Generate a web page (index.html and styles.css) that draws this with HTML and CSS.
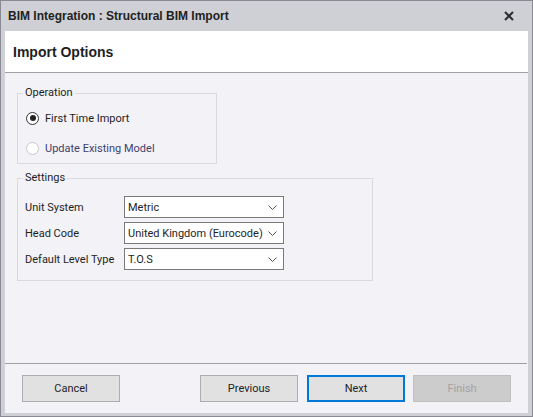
FILE: index.html
```html
<!DOCTYPE html>
<html>
<head>
<meta charset="utf-8">
<link rel="stylesheet" href="styles.css">
</head>
<body>
<div class="window">
  <div class="titlebar">
    <span class="title">BIM Integration : Structural BIM Import</span>
    <svg class="close" width="12" height="12" viewBox="0 0 12 12"><path d="M2 2 L10 10 M10 2 L2 10" stroke="#2b2b2b" stroke-width="2" fill="none"/></svg>
  </div>
  <div class="client">
    <div class="header">Import Options</div>
    <div class="body">
      <fieldset class="group op">
        <legend>Operation</legend>
        <div class="radio-row">
          <span class="radio checked"></span><span class="rlabel">First Time Import</span>
        </div>
        <div class="radio-row">
          <span class="radio disabled"></span><span class="rlabel dis">Update Existing Model</span>
        </div>
      </fieldset>
      <fieldset class="group settings">
        <legend>Settings</legend>
        <div class="field">
          <span class="flabel">Unit System</span>
          <div class="combo"><span class="cval">Metric</span><svg class="chev" width="9" height="5" viewBox="0 0 9 5"><path d="M0.5 0.5 L4.5 4.5 L8.5 0.5" stroke="#505050" stroke-width="1" fill="none"/></svg></div>
        </div>
        <div class="field">
          <span class="flabel">Head Code</span>
          <div class="combo"><span class="cval">United Kingdom (Eurocode)</span><svg class="chev" width="9" height="5" viewBox="0 0 9 5"><path d="M0.5 0.5 L4.5 4.5 L8.5 0.5" stroke="#505050" stroke-width="1" fill="none"/></svg></div>
        </div>
        <div class="field">
          <span class="flabel">Default Level Type</span>
          <div class="combo"><span class="cval">T.O.S</span><svg class="chev" width="9" height="5" viewBox="0 0 9 5"><path d="M0.5 0.5 L4.5 4.5 L8.5 0.5" stroke="#505050" stroke-width="1" fill="none"/></svg></div>
        </div>
      </fieldset>
    </div>
    <div class="footer">
      <button class="btn">Cancel</button>
      <div class="right">
        <button class="btn">Previous</button>
        <button class="btn primary">Next</button>
        <button class="btn disabled">Finish</button>
      </div>
    </div>
  </div>
</div>
</body>
</html>
```
FILE: styles.css
```css
html, body {
  margin: 0;
  padding: 0;
}
body {
  font-family: Roboto, "Liberation Sans", Arial, sans-serif;
  font-size: 11px;
  color: #1e1e1e;
}
.window {
  width: 533px;
  height: 417px;
  box-sizing: border-box;
  border: 1px solid #8a8a94;
  background: #cfd0d5;
  padding: 0 4px 3px 4px;
  display: flex;
  flex-direction: column;
}
.titlebar {
  height: 30px;
  display: flex;
  align-items: center;
  justify-content: space-between;
  padding: 0 13px 0 3px;
}
.title {
  font-family: "Liberation Sans", Arial, sans-serif;
  font-weight: bold;
  font-size: 12px;
  color: #222;
}
.close {
  display: block;
}
.client {
  flex: 1;
  background: #f2f2f7;
  display: flex;
  flex-direction: column;
}
.header {
  background: #fff;
  border-bottom: 1px solid #a0a0a0;
  display: flex;
  align-items: center;
  padding-left: 8px;
  font-family: "Liberation Sans", Arial, sans-serif;
  font-size: 14px;
  font-weight: bold;
  color: #1e1e1e;
  box-sizing: border-box;
  height: 42px;
}
.body {
  flex: 1;
  padding: 13px 12px 0 12px;
  display: flex;
  flex-direction: column;
  gap: 7px;
}
.group {
  margin: 0;
  border: 1px solid #d9d9de;
  padding: 0 5px;
  min-inline-size: 0;
  box-sizing: border-box;
}
.group legend {
  padding: 0 2px;
  color: #1e1e1e;
  line-height: 14px;
}
.op {
  width: 200px;
  height: 78px;
  padding-top: 3px;
}
.radio-row {
  display: flex;
  align-items: center;
  height: 30px;
  margin-left: 3px;
}
.radio {
  width: 11px;
  height: 11px;
  border-radius: 50%;
  border: 1px solid #333;
  background: #fff;
  box-sizing: content-box;
  position: relative;
  margin-right: 6px;
  flex-shrink: 0;
}
.radio.checked::after {
  content: "";
  position: absolute;
  left: 2.5px;
  top: 2.5px;
  width: 6px;
  height: 6px;
  border-radius: 50%;
  background: #222;
}
.radio.disabled {
  border-color: #c8c8cc;
}
.rlabel.dis {
  color: #3f3f6c;
}
.settings {
  width: 356px;
  height: 110px;
  padding-top: 11px;
  display: flex;
  flex-direction: column;
  gap: 4px;
}
.field {
  display: flex;
  align-items: center;
  height: 22px;
}
.flabel {
  width: 101px;
  padding-left: 2px;
  box-sizing: border-box;
  white-space: nowrap;
}
.combo {
  width: 160px;
  height: 22px;
  box-sizing: border-box;
  border: 1px solid #7a7a7a;
  background: #fff;
  display: flex;
  align-items: center;
  justify-content: space-between;
  padding: 0 6px 0 3px;
  flex-shrink: 0;
}
.cval {
  white-space: nowrap;
  overflow: hidden;
}
.chev {
  display: block;
  flex-shrink: 0;
}
.footer {
  height: 50px;
  box-sizing: border-box;
  border-top: 1px solid #a0a0a0;
  margin-right: 1px;
  display: flex;
  justify-content: space-between;
  align-items: flex-start;
  padding: 11px 16px 0 17px;
}
.right {
  display: flex;
  gap: 8px;
}
.btn {
  width: 98px;
  height: 27px;
  box-sizing: border-box;
  border: 1px solid #adadad;
  background: #e1e1e1;
  font-family: Roboto, "Liberation Sans", Arial, sans-serif;
  font-size: 11px;
  color: #1e1e1e;
  padding: 0;
  margin: 0;
}
.btn.primary {
  border: 2px solid #0078d7;
  margin-left: 1px;
}
.btn.disabled {
  background: #cccccc;
  border-color: #bfbfbf;
  color: #a3a3a3;
}
```
